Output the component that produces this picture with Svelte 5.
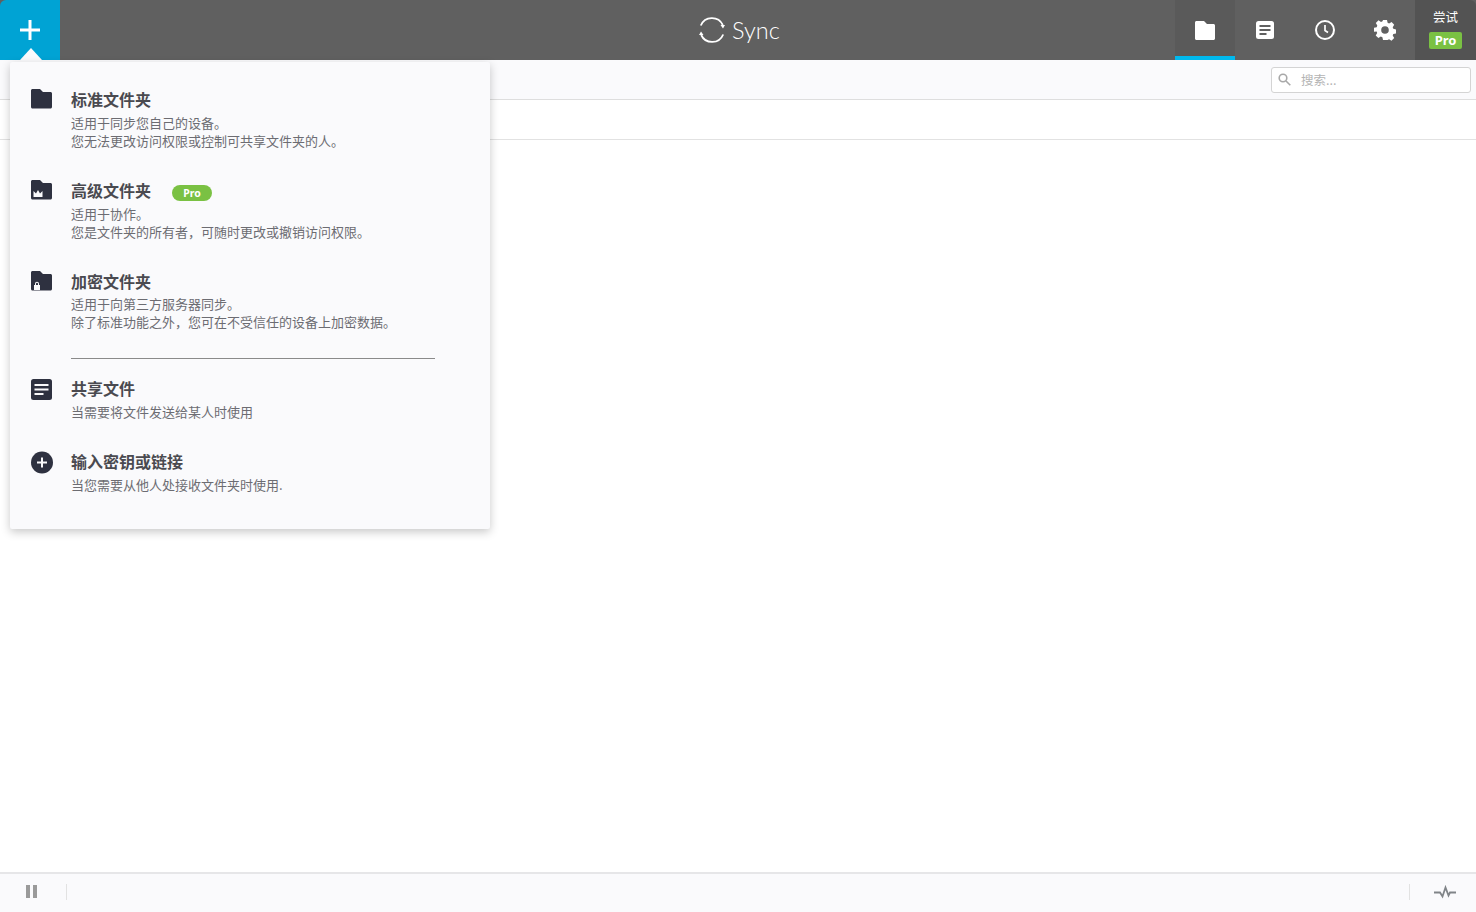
<script>
  const folderPath = 'M0 1.500C0 .7.7 0 1.500 0H9l3 3h7.500c.8 0 1.500.7 1.500 1.500V18c0 .8-.7 1.500-1.500 1.500h-18C.7 19.500 0 18.800 0 18z';
  const items = [
    { icon: 'folder', title: '标准文件夹', lines: ['适用于同步您自己的设备。', '您无法更改访问权限或控制可共享文件夹的人。'] },
    { icon: 'crown', title: '高级文件夹', pro: true, lines: ['适用于协作。', '您是文件夹的所有者，可随时更改或撤销访问权限。'] },
    { icon: 'lock', title: '加密文件夹', lines: ['适用于向第三方服务器同步。', '除了标准功能之外，您可在不受信任的设备上加密数据。'] }
  ];
  const others = [
    { icon: 'doc', title: '共享文件', lines: ['当需要将文件发送给某人时使用'] },
    { icon: 'plus', title: '输入密钥或链接', lines: ['当您需要从他人处接收文件夹时使用.'] }
  ];
</script>

{#snippet menuIcon(name)}
  <svg class="menu-icon" width="24" height="24" viewBox="0 0 24 24">
    {#if name === 'doc'}
      <rect x="1" y="1" width="21" height="21" rx="2.500" fill="#2e3140" />
      <path d="M4.500 6h14v2h-14zM4.500 10.500h14v2h-14zM4.500 15h9v2h-9z" fill="#fafafc" />
    {:else if name === 'plus'}
      <circle cx="12" cy="11.500" r="11" fill="#2e3140" />
      <path d="M11 6.500h2v4h4v2h-4v4h-2v-4H7v-2h4z" fill="#fafafc" />
    {:else}
      <path d={folderPath} transform="translate(1 0)" fill="#2e3140" />
      {#if name === 'crown'}
        <path d="M3.500 17v-6l2.500 2.500L8 10l2 3.500 2.500-2.500v6z" fill="#fafafc" />
      {:else if name === 'lock'}
        <path d="M4 14h1v-1.300a2 2 0 0 1 4 0V14h1v5H4zm2-1.300V14h2v-1.300a1 1 0 0 0-2 0z" fill="#fafafc" />
      {/if}
    {/if}
  </svg>
{/snippet}

{#snippet menuItem(item)}
  <div class="item">
    {@render menuIcon(item.icon)}
    <div>
      <div class="item-title">
        {item.title}
        {#if item.pro}<span class="pro-pill">Pro</span>{/if}
      </div>
      {#each item.lines as line}
        <div class="item-line">{line}</div>
      {/each}
    </div>
  </div>
{/snippet}

<div class="app">
  <header class="topbar">
    <button class="add" aria-label="添加">
      <svg width="20" height="20" viewBox="0 0 20 20"><path d="M8.500 0h3v8.500H20v3h-8.500V20h-3v-8.500H0v-3h8.500z" fill="#fff" /></svg>
    </button>
    <div class="logo">
      <svg width="28" height="28" viewBox="0 0 28 28" fill="none" stroke="#fff" stroke-width="1.800">
        <path d="M2.800 9.500A12 12 0 0 1 24.800 9" />
        <path d="M25.200 18.500A12 12 0 0 1 3.200 19" />
        <path d="M22.500 9h4.500l-2 3.500zM1 19h4.500L3 15.500z" stroke="none" fill="#fff" />
      </svg>
      <span>Sync</span>
    </div>
    <nav class="tabs">
      <div class="tab active">
        <svg width="20" height="19" viewBox="0 0 20 19"><path d="M0 1.500C0 .7.700 0 1.500 0H9l3 3h6.500c.8 0 1.500.7 1.500 1.500v13c0 .8-.7 1.500-1.500 1.500h-17C.7 19 0 18.300 0 17.500z" fill="#fff" /></svg>
      </div>
      <div class="tab">
        <svg width="20" height="20" viewBox="0 0 20 20"><rect x="1" y="1" width="18" height="18" rx="2.500" fill="#fff" /><path d="M4.500 5h11v2h-11zM4.500 9h11v2h-11zM4.500 13h7v2h-7z" fill="#606060" /></svg>
      </div>
      <div class="tab">
        <svg width="20" height="20" viewBox="0 0 20 20" fill="none" stroke="#fff"><circle cx="10" cy="10" r="9" stroke-width="2" /><path d="M10 5v5.500l3 2" stroke-width="1.700" /></svg>
      </div>
      <div class="tab">
        <svg width="22" height="22" viewBox="0 0 22 22"><path fill="#fff" fill-rule="evenodd" d="M9 1h4l.6 2.800 1.500.7 2.500-1.500 2.600 2.800-1.500 2.400.6 1.600 2.700.7v4l-2.700.6-.6 1.500 1.500 2.500-2.700 2.700-2.400-1.500-1.600.6L13 21H9l-.6-2.800-1.600-.6-2.400 1.500-2.700-2.700 1.500-2.500-.6-1.500L0 12.800v-4l2.700-.6.6-1.600L1.800 4.100l2.700-2.800L7 2.900l1.500-.6zm2 6.200a3.800 3.800 0 1 0 0 7.600 3.800 3.800 0 0 0 0-7.600z" /></svg>
      </div>
      <div class="try">
        <span>尝试</span>
        <span class="try-pro">Pro</span>
      </div>
    </nav>
  </header>

  <div class="toolbar">
    <label class="search">
      <svg width="13" height="13" viewBox="0 0 13 13" fill="none" stroke="#a8a8a8" stroke-width="1.600"><circle cx="5" cy="5" r="3.800" /><path d="M8 8l4.300 4.300" /></svg>
      <span>搜索...</span>
    </label>
  </div>
  <div class="list-head"></div>
  <main class="content"></main>

  <footer class="statusbar">
    <div class="pause"><i></i><i></i></div>
    <div class="sep"></div>
    <div class="spacer"></div>
    <div class="sep"></div>
    <svg class="pulse" width="24" height="14" viewBox="0 0 24 14" fill="none" stroke="#808488" stroke-width="1.800"><path d="M1 7.500h6l2.500 4 3-9 3 8 1.500-3h6" /></svg>
  </footer>

  <div class="arrow"></div>
  <div class="menu">
    <div class="group">
      {#each items as item}
        {@render menuItem(item)}
      {/each}
    </div>
    <div class="rule"></div>
    <div class="group">
      {#each others as item}
        {@render menuItem(item)}
      {/each}
    </div>
  </div>
</div>

<style>
  :global(body) {
    margin: 0;
    background: #fff;
  }

  .app {
    position: relative;
    height: 912px;
    display: flex;
    flex-direction: column;
    overflow: hidden;
    font-family: "Noto Sans CJK SC", "Noto Sans", sans-serif;
  }

  .topbar {
    height: 60px;
    flex: none;
    display: flex;
    align-items: stretch;
    background: #606060;
    position: relative;
  }

  .add {
    width: 60px;
    border: 0;
    padding: 0;
    background: #00a3d4;
    border-top-left-radius: 6px;
    display: flex;
    align-items: center;
    justify-content: center;
  }

  .logo {
    position: absolute;
    left: 698px;
    top: 16px;
    display: flex;
    align-items: center;
    gap: 6px;
    color: #fff;
    font: 300 23.500px/28px Lato, sans-serif;
  }

  .tabs {
    margin-left: auto;
    display: flex;
  }

  .tab {
    width: 60px;
    box-sizing: border-box;
    display: flex;
    align-items: center;
    justify-content: center;
  }

  .tab.active {
    background: #5a5a5a;
    border-bottom: 4px solid #00b9ee;
    padding-top: 4px;
  }

  .try {
    width: 61px;
    background: #535353;
    border-top-right-radius: 6px;
    color: #fff;
    font-size: 12.500px;
    line-height: 18px;
    padding-top: 8px;
    box-sizing: border-box;
    display: flex;
    flex-direction: column;
    align-items: center;
    gap: 6px;
  }

  .try-pro {
    width: 33px;
    height: 17px;
    border-radius: 2px;
    background: #7ac143;
    font: 700 13px/17px "Noto Sans", sans-serif;
    text-align: center;
  }

  .toolbar {
    height: 40px;
    flex: none;
    box-sizing: border-box;
    background: #fafafc;
    border-bottom: 1px solid #dedede;
    display: flex;
    justify-content: flex-end;
    align-items: flex-start;
    padding: 7px 5px 0 0;
  }

  .search {
    width: 200px;
    height: 26px;
    box-sizing: border-box;
    background: #fff;
    border: 1px solid #d4d4d4;
    border-radius: 3px;
    display: flex;
    align-items: center;
    padding: 0 0 2px 6px;
    gap: 10px;
    color: #b4b4b4;
    font-size: 12.500px;
  }

  .list-head {
    height: 40px;
    flex: none;
    box-sizing: border-box;
    border-bottom: 1px solid #e2e2e2;
  }

  .content {
    flex: 1;
  }

  .statusbar {
    height: 40px;
    flex: none;
    box-sizing: border-box;
    background: #fafafc;
    border-top: 2px solid #e6e6e8;
    padding-bottom: 3px;
    display: flex;
    align-items: center;
  }

  .pause {
    width: 66px;
    padding-left: 26px;
    box-sizing: border-box;
    display: flex;
    gap: 3px;
  }

  .pause i {
    width: 4px;
    height: 13px;
    background: #9a9a9a;
  }

  .sep {
    width: 1px;
    height: 16px;
    background: #e2e2e2;
  }

  .spacer {
    flex: 1;
  }

  .pulse {
    margin: 0 19px 0 23px;
  }

  .arrow {
    position: absolute;
    left: 20px;
    top: 48px;
    width: 0;
    height: 0;
    border-left: 11px solid transparent;
    border-right: 11px solid transparent;
    border-bottom: 12px solid #fafafc;
  }

  .menu {
    position: absolute;
    left: 10px;
    top: 62px;
    width: 480px;
    height: 467px;
    box-sizing: border-box;
    padding: 24px 55px 0 20px;
    background: #fafafc;
    border-radius: 2px;
    box-shadow: 0 3px 10px rgba(0, 0, 0, 0.22);
  }

  .group {
    display: flex;
    flex-direction: column;
    gap: 27px;
  }

  .item {
    display: flex;
    gap: 17px;
  }

  .item:nth-child(3) .item-title {
    margin-bottom: 1px;
  }

  .menu-icon {
    flex: none;
    margin-top: 3px;
  }

  .item-title {
    color: #4a4a50;
    font-size: 16px;
    font-weight: 700;
    line-height: 26px;
    margin-bottom: 2px;
    display: flex;
    align-items: center;
    gap: 21px;
  }

  .pro-pill {
    width: 40px;
    height: 16px;
    border-radius: 8px;
    background: #7ac143;
    color: #fff;
    font: 700 10.500px/16px "Noto Sans", sans-serif;
    text-align: center;
    margin-top: 5px;
  }

  .item-line {
    color: #6c6c72;
    font-size: 13px;
    line-height: 18px;
  }

  .rule {
    height: 1px;
    background: #8a8a8a;
    margin: 27px 0 16px 41px;
  }
</style>
